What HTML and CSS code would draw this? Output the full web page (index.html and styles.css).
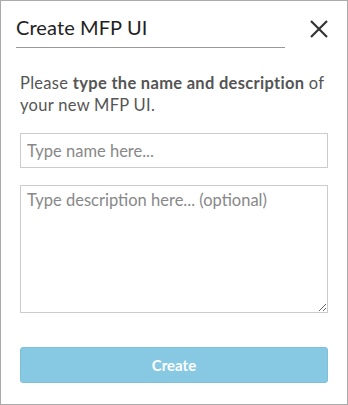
FILE: index.html
```html
<!DOCTYPE html>
<html lang="en">
<head>
    <meta charset="UTF-8">
    <title>Create MFP UI</title>
    <link rel="stylesheet" href="styles.css">
</head>
<body>
    <div class="dialog">
        <div class="dialogHeader">
            <div class="dialogTitle">Create MFP UI</div>
            <button class="closeButton" aria-label="Close">
                <svg width="18" height="18" viewBox="0 0 18 18">
                    <path d="M1 1 L17 17 M17 1 L1 17" stroke="#333" stroke-width="2.2" fill="none"/>
                </svg>
            </button>
        </div>
        <div class="dialogBody">
            <p class="intro">Please <b>type the name and description</b> of your new MFP UI.</p>
            <input class="field" type="text" placeholder="Type name here...">
            <textarea class="field area" placeholder="Type description here... (optional)"></textarea>
            <button class="createButton">Create</button>
        </div>
    </div>
</body>
</html>
```

FILE: styles.css
```css
body {
    margin: 0;
    font-family: Lato, "Open Sans", sans-serif;
    color: #555;
}

.dialog {
    width: 348px;
    height: 405px;
    box-sizing: border-box;
    border: 1px solid #aaa;
    background: #fff;
}

.dialogHeader {
    display: flex;
    align-items: flex-start;
    justify-content: space-between;
    padding: 12px 19px 0 15px;
}

.dialogTitle {
    width: 269px;
    font-size: 20px;
    line-height: 28px;
    padding-bottom: 6px;
    color: #222;
    letter-spacing: 0.1px;
    border-bottom: 1px solid #999;
}

.closeButton {
    border: none;
    background: none;
    padding: 0;
    margin-top: 7px;
    cursor: pointer;
}

.closeButton svg {
    display: block;
}

.dialogBody {
    padding: 0 19px;
}

.intro {
    margin: 24px 0 17px;
    font-size: 16.5px;
    line-height: 22px;
    letter-spacing: 0.3px;
}

.intro b {
    font-weight: bold;
}

.field {
    display: block;
    width: 100%;
    box-sizing: border-box;
    height: 35px;
    border: 1px solid #ccc;
    padding: 4px 6px;
    font-family: inherit;
    font-size: 16.5px;
    color: #555;
    margin: 0;
}

.field::placeholder {
    color: #888;
}

.area {
    height: 128px;
    margin-top: 17px;
    resize: vertical;
}

.createButton {
    display: block;
    width: 100%;
    height: 36px;
    margin-top: 34px;
    border: 1px solid #7fbfd8;
    border-radius: 3px;
    background: #87c9e3;
    color: #fff;
    font-family: inherit;
    font-size: 15px;
    font-weight: bold;
}
```
